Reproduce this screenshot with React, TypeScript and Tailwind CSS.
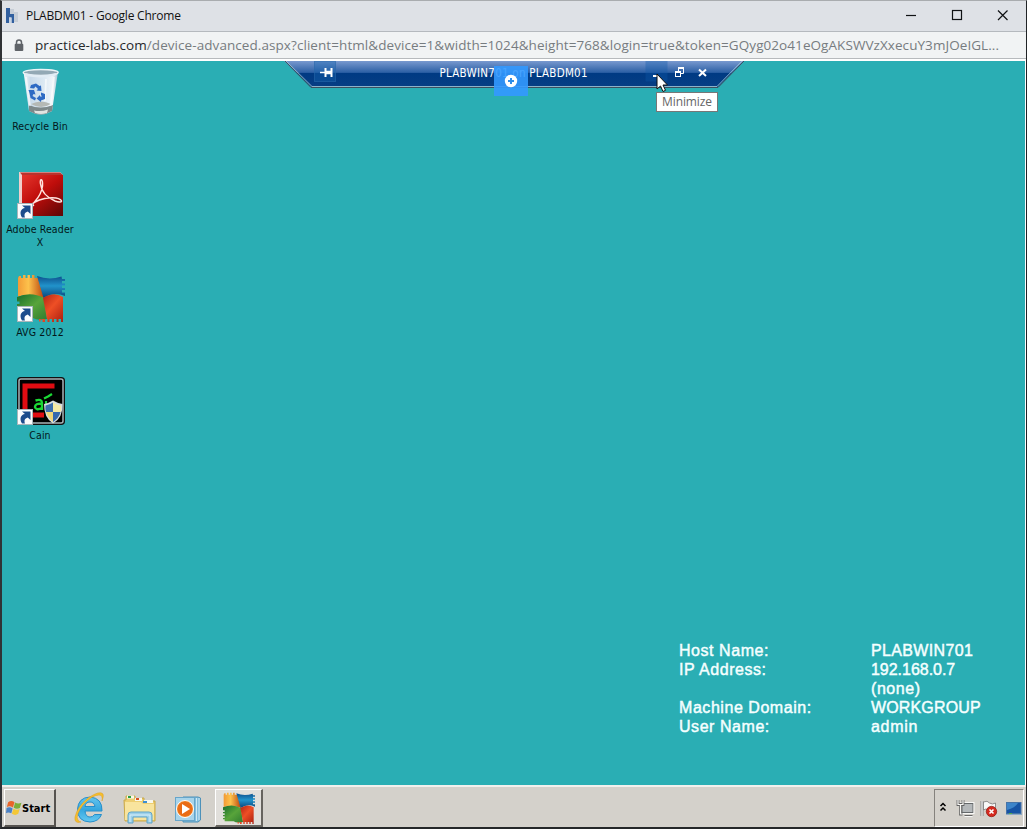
import type { ReactNode } from "react";

const ui = "font-['DejaVu_Sans_Condensed','DejaVu_Sans',sans-serif] [font-stretch:condensed]";
const segoe = "font-['Open_Sans','Noto_Sans',sans-serif]";

function ShortcutArrow() {
  return (
    <g>
      <rect x="0.5" y="32.5" width="15" height="15" fill="#fbfcfd" stroke="#a9b6bb" />
      <path d="M5 46.5 C2 41.500 4 37.500 8 37 L5 34.5 H13.5 V43 L10.8 40.500 C7.5 41.500 7 43.5 8 46.5Z" fill="#1c4c8c" />
    </g>
  );
}

function RecycleBin() {
  return (
    <svg width="48" height="48" viewBox="0 0 48 48">
      <defs>
        <linearGradient id="bin" x1="0" x2="1">
          <stop offset="0" stopColor="#f3f7fb" />
          <stop offset=".2" stopColor="#c9dbea" />
          <stop offset=".6" stopColor="#dce9f3" />
          <stop offset=".85" stopColor="#f0f5f9" />
          <stop offset="1" stopColor="#a5c3d2" />
        </linearGradient>
      </defs>
      <path d="M6.500 4 L12 43 Q24 50 35 43 L41 4Z" fill="url(#bin)" />
      <path d="M12 37 Q23 42 36 37 L35 43 Q24 50 12 43Z" fill="#7e898a" />
      <path d="M14 36 Q24 31 34 36 Q24 42 14 36Z" fill="#b5b9b5" />
      <path d="M17 42.500 Q24 44 31 41.500 L30 45 Q24 47 18 45Z" fill="#e1e4e1" />
      <ellipse cx="23.700" cy="4.500" rx="17.500" ry="3" fill="#93a9b5" stroke="#eef4f7" strokeWidth="1.300" />
      <path d="M8 5 Q24 9 39 5 L38.500 7.500 Q24 11 9 8Z" fill="#e2edf5" />
      <path d="M29 11 L28 33 M37 9 L33.500 38 M9 9 L13 38" stroke="#fff" strokeWidth="1.800" opacity=".6" />
      <g fill="#2e6bc4">
        <path d="M14 17 L19 15.500 L22.500 18 L24 17.500 L24.500 23 L19.500 22.500 L21 21 L18.500 18.500 L17 20.500 L13 20Z" />
        <path d="M11.500 22 L17 22 L18.500 26.500 L16.500 26 L15.500 28 L19 30 L18 32.500 L13.500 30 L12.500 25Z" />
        <path d="M24 24.500 L28 26 L28 31 L24 32.500 V34 L19.500 30.500 L23 27 V28.500 L25 28.500 L24 27Z" />
      </g>
    </svg>
  );
}

function AdobeReader() {
  return (
    <svg width="48" height="48" viewBox="0 0 48 48">
      <defs>
        <linearGradient id="adobe" x1="0.100" y1="0" x2=".9" y2="1">
          <stop offset="0" stopColor="#e03129" />
          <stop offset=".45" stopColor="#c00d0b" />
          <stop offset="1" stopColor="#620706" />
        </linearGradient>
      </defs>
      <path d="M2 1 H43 L46 4 V45 H5 L2 43Z" fill="#f0cfcc" />
      <path d="M3 1.500 H43 L46 4 H5Z" fill="#b9332e" />
      <rect x="5" y="4" width="41" height="41" fill="url(#adobe)" />
      <path d="M15.500 34 C16 31 24 27 25.500 15 C26 7 22.500 7 23.500 13 C24.500 21 31 27 38 30 C46 33 47 28.500 39 27 C32 26 23 28 18 31 C14 33 14.500 35.500 17 34" fill="none" stroke="#ffe3df" strokeWidth="1.500" />
      <ShortcutArrow />
    </svg>
  );
}

function AvgArt() {
  return (
    <g>
      <path d="M1 4 L2 2 H4 V4 H6 V1 H8.500 V4 H10.500 V1 H13 V4 H15 V1 H17.500 V4 H19 L22 4 L27 24 Q14 19 1 22.500Z" fill="url(#avgo)" />
      <path d="M20 2 Q32 6.500 44.500 2.500 L45 5 H48 V7 H45 V9.500 H48 V11.500 H45 V14 H48 V16 H45 V18.500 H48 V22 Q37 17 26.500 24Z" fill="url(#avgb)" />
      <path d="M0 23 Q14 17 27 24 L30 45 Q20 47 16 44 H2.500 V41 H0 V39 H2.500 V36.500 H0 V34.500 H2.500 V32 H0 V30 H2.500 V27.500 H0Z" fill="url(#avgg)" />
      <path d="M26 24 Q37 17 46 23 V48 H44 V45 H41.500 V48 H39.500 V45 H37 V48 H35 V45 H32.500 V48 H30.500 V45 H28 V48 H25.500 V45.500 H23.500 V47.500 H22 V45 H30Z" fill="url(#avgr)" />
    </g>
  );
}

function GradientDefs() {
  return (
    <svg width="0" height="0" className="absolute" aria-hidden="true">
      <defs>
        <linearGradient id="avgo" x1="0" x2="1"><stop offset="0" stopColor="#f29a35" /><stop offset=".4" stopColor="#fdc24c" /><stop offset="1" stopColor="#b8440c" /></linearGradient>
        <linearGradient id="avgb" x1="0" x2="0" y1="0" y2="1"><stop offset="0" stopColor="#0d4f8c" /><stop offset=".45" stopColor="#2193cb" /><stop offset="1" stopColor="#0a4479" /></linearGradient>
        <linearGradient id="avgg" x1="0" y1="0" x2="1" y2="1"><stop offset="0" stopColor="#166d2c" /><stop offset=".5" stopColor="#58a43a" /><stop offset="1" stopColor="#2f7c30" /></linearGradient>
        <linearGradient id="avgr" x1="0" y1="0" x2="1" y2="1"><stop offset="0" stopColor="#a61b10" /><stop offset=".5" stopColor="#ee4f25" /><stop offset="1" stopColor="#a91e10" /></linearGradient>
      </defs>
    </svg>
  );
}

function Avg() {
  return (
    <svg width="48" height="48" viewBox="0 0 48 48"><AvgArt /><ShortcutArrow /></svg>
  );
}

function Cain() {
  return (
    <svg width="48" height="48" viewBox="0 0 48 48">
      <rect x=".75" y=".75" width="46.500" height="46.500" rx="3" fill="#000" stroke="#111" strokeWidth="1.500" />
      <rect x="2" y="2" width="44" height="44" rx="2" fill="none" stroke="#a9b4b8" strokeWidth="1.500" />
      <path d="M37.500 9 H8 V38 H27" fill="none" stroke="#e00c12" strokeWidth="5" />
      <g fill="none" stroke="#1bd935" strokeWidth="2.400">
        <path d="M18.500 23.500 Q25 21.500 25 26 V33 M25 27 Q18 26 18 30 Q19 34 25 31" />
        <path d="M29 24 V33 M27 21.500 L31 19.500 L35 17" strokeWidth="2.200" />
      </g>
      <path d="M27 27 Q32 26 36 23.500 Q40 26 45.500 27 Q46 41 36 46.500 Q27 41 27 27Z" fill="#d9dde0" />
      <path d="M28.500 28.500 Q33 27.500 36 25.500 V35 H29Q28 32 28.500 28.500Z" fill="#3d6fae" />
      <path d="M36 25.500 Q40 28 44 28.500 Q44.500 32 43.500 35 H36Z" fill="#f5e9a5" />
      <path d="M29 35 H36 V45 Q31 41 29 35Z" fill="#f0d578" />
      <path d="M36 35 H43.500 Q42 41 36 45Z" fill="#3568ae" />
      <ShortcutArrow />
    </svg>
  );
}

function DesktopIcon({ icon, children }: { icon: ReactNode; children: ReactNode }) {
  return (
    <div className="flex h-[103px] w-[76px] flex-col items-center">
      <div className="ml-[2px] h-12 w-12">{icon}</div>
      <div className={`${ui} mt-[4px] text-center text-[10.5px] leading-[13px] tracking-[0.120px] whitespace-nowrap text-[#03171a]`}>{children}</div>
    </div>
  );
}

function ConnectionBar() {
  return (
    <div className="absolute top-0 left-[282px] h-[27px] w-[460px]">
      <svg className="absolute inset-0" width="460" height="27" viewBox="0 0 460 27">
        <defs>
          <linearGradient id="bar" x1="0" x2="0" y1="0" y2="1">
            <stop offset="0" stopColor="#7899cf" />
            <stop offset=".44" stopColor="#2d60a5" />
            <stop offset=".46" stopColor="#003a83" />
            <stop offset="1" stopColor="#073e84" />
          </linearGradient>
        </defs>
        <path d="M0 0 H460 L434 26 H27Z" fill="url(#bar)" />
        <path d="M1 0 L27 26.500 H434 L460 0" fill="none" stroke="#3b4f60" />
        <path d="M2 0 L28 25.500 H433 L458 0" fill="none" stroke="#9cc0d2" strokeWidth=".9" />
        <rect x="30.500" y="0" width="21" height="20.500" fill="#1664ae" fillOpacity=".4" stroke="#2767aa" strokeOpacity=".6" />
        <rect x="361.500" y="0" width="22" height="20.500" fill="#0e5aa8" fillOpacity=".35" />
        <path d="M36 11.500 H41" stroke="#fff" strokeWidth="1.500" />
        <path d="M41.500 7 V16 M47.500 7 V16" stroke="#fff" strokeWidth="2" />
        <path d="M41 11.500 H48" stroke="#fff" strokeWidth="3.500" />
        <path d="M369 15 H375" stroke="#fff" strokeWidth="2" />
        <path d="M394.500 10 V6.500 H399.500 V12.500 H397" fill="none" stroke="#fff" />
        <path d="M394 7 H400" stroke="#fff" strokeWidth="2" />
        <rect x="391.500" y="10.500" width="5" height="5" fill="#063f88" stroke="#fff" />
        <path d="M391 11 H397" stroke="#fff" strokeWidth="2" />
        <path d="M415 8.500 L422 15 M422 8.500 L415 15" stroke="#fff" strokeWidth="2" />
      </svg>
      <div className={`${ui} relative ml-[155.500px] pt-[6px] text-[11.5px] leading-[13px] tracking-[0.250px] whitespace-nowrap text-white`}>PLABWIN701 on PLABDM01</div>
    </div>
  );
}

function StartFlag() {
  return (
    <svg width="16" height="16" viewBox="0 0 15 15">
      <path d="M2 2 Q5 0 8 2 L6.500 7 Q3.500 5 .8 6.500Z" fill="#e9652a" />
      <path d="M8.500 2.300 Q11.500 4 14.500 2.500 L13 7.500 Q10 9 7.200 7.200Z" fill="#7caf39" />
      <path d="M.5 7.500 Q3.500 6 6.200 8 L5 12.500 Q2 11 0 12.500Z" fill="#4a81c6" />
      <path d="M7 8.200 Q10 10 12.800 8.500 L11.500 13 Q8.500 15 5.500 13Z" fill="#f4c735" />
    </svg>
  );
}

function InternetExplorer() {
  return (
    <svg width="32" height="34" viewBox="0 0 32 34">
      <defs><linearGradient id="ie" x1="0" x2="0" y1="0" y2="1"><stop stopColor="#66c5ee" /><stop offset=".5" stopColor="#36a7df" /><stop offset="1" stopColor="#66c9f1" /></linearGradient></defs>
      <path d="M28 20 H11 Q11.500 26 16 26 Q19 26 20.500 23.500 H27.500 Q25 30.500 16 31 Q3.500 30.500 3.500 18.500 Q4 6.500 16 6 Q28.500 7 28 20 M21 15.500 Q20 11 16 11 Q11.500 11 11 15.500Z" fill="url(#ie)" fillRule="evenodd" stroke="#258ecb" />
      <path d="M7 31 Q0 33 1 26 Q3 16 14 7 Q26 -1 29 3 Q30 5 28 10 Q29 4 25 4 Q18 4 9 14 Q1 25 4 29 Q5 31 7 31Z" fill="#f6bf2c" stroke="#dc9c23" strokeWidth=".5" />
    </svg>
  );
}

function Explorer() {
  return (
    <svg width="34" height="30" viewBox="0 0 34 30">
      <path d="M1 5 H3 V1 H12 V4 H19 V3 H21 V6 H32 V26 H2Z" fill="#eece71" stroke="#caa948" />
      <path d="M4 2 H11 M12 4.500 H19 M21 6.500 H30" stroke="#f8f8ed" strokeWidth="3" />
      <path d="M5 2 H8" stroke="#29a045" strokeWidth="2" />
      <path d="M13 4 H16" stroke="#d95225" strokeWidth="2" />
      <path d="M20 7 H24" stroke="#3c8ed1" strokeWidth="2" />
      <path d="M2 7 H18 L20 9 H31 V25 H2Z" fill="#f8e49e" />
      <path d="M5 28 V20 Q5 17 8 17 H26 Q29 17 29 20 V28 H24 V22 H10 V28Z" fill="#9dd0e9" stroke="#5fa4c9" />
      <path d="M7 27 V20 H27 V27" fill="none" stroke="#d6effa" />
    </svg>
  );
}

function MediaPlayer() {
  return (
    <svg width="27" height="27" viewBox="0 0 27 27">
      <path d="M8 1 H23 L25.500 2 V24 L23 26 H8Z" fill="#83bddc" stroke="#4d91b9" />
      <path d="M21.500 2 V25 M24 2 V24" stroke="#cee9f6" />
      <rect x=".5" y="1.500" width="19" height="23" fill="#a8d4ea" stroke="#66a5ca" />
      <circle cx="10" cy="13" r="8.500" fill="#ef7c1d" stroke="#fff" />
      <circle cx="10" cy="13" r="7" fill="#e96b16" />
      <path d="M7 8 L15 13 L7 18Z" fill="#fff" />
    </svg>
  );
}

function TrayIcons() {
  return (
    <svg width="86" height="30" viewBox="0 0 86 30">
      <path d="M4.500 13 L7 10.500 L9.500 13 M4.500 17.500 L7 15 L9.500 17.500" fill="none" stroke="#000" strokeWidth="1.500" />
      <g transform="translate(-.5 -1)">
        <rect x="26.500" y="11.500" width="11" height="9" fill="#b4b8ba" stroke="#64686a" />
        <rect x="25.500" y="10.500" width="13" height="11" fill="none" stroke="#f8f8f6" />
        <path d="M29 23.500 H37" stroke="#666" /><path d="M29 24.500 H37" stroke="#f6f6f4" />
        <path d="M22.500 8 V12.500 H27.500 V8 M25 13 V22 H27" fill="none" stroke="#656565" strokeWidth="2.800" />
        <path d="M22.500 8 V12.500 H27.500 V8 M25 13 V22 H27" fill="none" stroke="#f8f8f5" strokeWidth="1.200" />
      </g>
      <g transform="translate(-1.500 -1)">
        <path d="M47.500 9 V24" stroke="#777" strokeWidth="2.800" />
        <path d="M47.500 9 V24" stroke="#fff" strokeWidth="1.200" />
        <path d="M49 10 Q53 8 55 11 Q58 13 61 11 V19 Q57 21 54 18 Q51 16 49 18Z" fill="#f8f8f7" stroke="#777" strokeWidth=".8" />
        <circle cx="57" cy="19.500" r="5.200" fill="#d52a1f" stroke="#8d170f" strokeWidth=".7" />
        <path d="M55 17.500 L59 21.500 M59 17.500 L55 21.500" stroke="#fff" strokeWidth="1.600" />
      </g>
      <rect x="70.500" y="9.500" width="14.500" height="11" fill="#1653a4" stroke="#4673a7" />
      <path d="M71 10 H82 Q79 15 71 17Z" fill="#3c84c9" />
      <path d="M70 21.500 H86" stroke="#8caac5" /><path d="M73 20.500 H76" stroke="#50af4a" />
    </svg>
  );
}

export default function App() {
  return (
    <div className="flex h-[829px] w-[1027px] flex-col overflow-hidden border-t border-r border-b-2 border-l-2 border-t-[#a9acaf] border-r-[#202326] border-b-[#252729] border-l-[#303235] bg-white">
      <GradientDefs />
      <header className="flex h-[31px] shrink-0 items-center border-b border-[#b5b9be] bg-[#dee1e6]">
        <svg className="ml-[3px]" width="16" height="16" viewBox="0 0 16 16">
          <path d="M5 1 H9 V4 H13 V14 H9 V7 H5Z" fill="#c6cdd6" />
          <path d="M1 0 H5 V6 H9 V15 H6.500 V9.500 H4 V15 H1Z" fill="#315f9f" />
          <path d="M4 9.500 H6.500 V15 H4Z" fill="#c9d4e2" />
        </svg>
        <div className={`${segoe} ml-[5px] flex-1 text-[12px] leading-4 tracking-[-0.200px] whitespace-nowrap text-[#111]`}>PLABDM01 - Google Chrome</div>
        <svg className="mr-px" width="122" height="16" viewBox="0 0 122 16" fill="none" stroke="#101214" strokeWidth="1.200">
          <path d="M3 7.500 H13" /><rect x="49.500" y="2.500" width="9" height="9" /><path d="M95 2.500 L104.500 12 M104.500 2.500 L95 12" />
        </svg>
      </header>
      <div className="flex h-[27px] shrink-0 items-center border-b border-[#b7babd] bg-[#f1f3f4]">
        <svg className="ml-[12px]" width="10" height="13" viewBox="0 0 10 13"><path d="M2.500 5 V3.500 Q2.500 1 5 1 Q7.500 1 7.500 3.500 V5" fill="none" stroke="#5f6368" strokeWidth="1.500" /><rect x=".7" y="4.700" width="8.600" height="7.300" rx="1" fill="#5f6368" /></svg>
        <div className={`${segoe} ml-[11px] text-[13.5px] leading-5 tracking-[0.070px] whitespace-nowrap text-[#777c80]`}><span className="text-[#25282b]">practice-labs.com</span>/device-advanced.aspx?client=html&amp;device=1&amp;width=1024&amp;height=768&amp;login=true&amp;token=GQyg02o41eOgAKSWVzXxecuY3mJOeIGL...</div>
      </div>
      <main className="relative mt-[2px] mr-px flex h-[724px] shrink-0 flex-col justify-between bg-[#2aaeb4]">
        <div className="flex flex-col pt-[7px]">
          <DesktopIcon icon={<RecycleBin />}>Recycle Bin</DesktopIcon>
          <DesktopIcon icon={<AdobeReader />}>Adobe Reader<br />X</DesktopIcon>
          <DesktopIcon icon={<Avg />}>AVG 2012</DesktopIcon>
          <DesktopIcon icon={<Cain />}>Cain</DesktopIcon>
        </div>
        <div className="mr-[23px] mb-[49px] grid w-[323px] grid-cols-[192px_1fr] self-end font-['Liberation_Sans',sans-serif] text-[16px] leading-[19px] tracking-[0.550px] text-[#f5ffff] [-webkit-text-stroke:0.450px_#f5ffff]">
          <span>Host Name:</span><span className="tracking-[0.350px]">PLABWIN701</span>
          <span>IP Address:</span><span className="tracking-[-0.030px]">192.168.0.7</span>
          <span /><span>(none)</span>
          <span>Machine Domain:</span><span className="tracking-[0.150px]">WORKGROUP</span>
          <span>User Name:</span><span className="tracking-[0.700px]">admin</span>
        </div>
        <ConnectionBar />
        <div className="absolute top-[5px] left-[492px] flex h-[30px] w-[34px] items-center justify-center bg-[#3399ff]/90">
          <svg width="14" height="14" viewBox="0 0 14 14"><circle cx="7" cy="7" r="6.200" fill="#fff" /><path d="M4 7 H10 M7 4 V10" stroke="#318ee8" strokeWidth="2" /></svg>
        </div>
        <div className={`${segoe} absolute top-[31px] left-[654px] flex h-[20px] w-[62px] items-center justify-center border border-[#777] bg-white text-[12px] leading-4 tracking-[-0.100px] text-[#666]`}>Minimize</div>
        <svg className="absolute top-[12px] left-[654px]" width="13" height="20" viewBox="0 0 13 20"><path d="M1 1 V16 L4.500 13 L7 18.500 L9.500 17.300 L7 12 H11.500Z" fill="#fff" stroke="#111" /></svg>
      </main>
      <footer className="flex h-[42px] shrink-0 items-start border-t-2 border-t-[#f1f0ed] bg-[#d4d1cb] pt-[2px]">
        <button className={`${ui} ml-[2px] flex h-[38px] w-[52px] items-center border-t border-r-2 border-b-2 border-l border-t-white border-r-[#56534f] border-b-[#56534f] border-l-white pl-px text-[11px] leading-[13px] font-bold text-black`}>
          <StartFlag /><span className="pt-px">Start</span>
        </button>
        <div className="mt-[2px] ml-[18px]"><InternetExplorer /></div>
        <div className="mt-[6px] ml-[17px]"><Explorer /></div>
        <div className="mt-[7px] ml-[18px]"><MediaPlayer /></div>
        <div className="ml-[13px] flex h-[38px] w-[48px] items-center justify-center border-t border-r-2 border-b-2 border-l border-t-white border-r-[#67645f] border-b-[#67645f] border-l-white bg-[#e1dfdb]">
          <svg width="32" height="32" viewBox="0 0 48 48"><AvgArt /></svg>
        </div>
        <div className="mr-[2px] ml-auto h-[38px] w-[90px] border-t border-r border-b border-l border-t-[#85827d] border-r-white border-b-white border-l-[#85827d] pt-[3px] pl-px"><TrayIcons /></div>
      </footer>
    </div>
  );
}
